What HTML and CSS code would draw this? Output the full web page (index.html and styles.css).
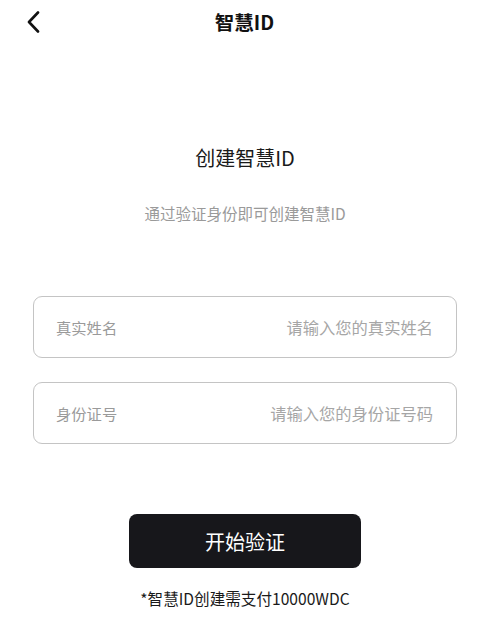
FILE: index.html
```html
<!DOCTYPE html>
<html lang="zh-CN">
<head>
<meta charset="utf-8">
<title>智慧ID</title>
<link rel="stylesheet" href="styles.css">
</head>
<body>
<header class="nav">
  <button class="back" aria-label="返回">
    <svg width="13" height="22" viewBox="0 0 13 22"><path d="M11 1.5 L2 11 L11 20.5" fill="none" stroke="#111" stroke-width="2.6" stroke-linecap="round" stroke-linejoin="round"/></svg>
  </button>
  <div class="nav-title">智慧ID</div>
  <div class="nav-side"></div>
</header>
<main class="content">
  <h1 class="title">创建智慧ID</h1>
  <p class="subtitle">通过验证身份即可创建智慧ID</p>
  <div class="field field-first">
    <span class="label">真实姓名</span>
    <span class="placeholder">请输入您的真实姓名</span>
  </div>
  <div class="field">
    <span class="label">身份证号</span>
    <span class="placeholder">请输入您的身份证号码</span>
  </div>
  <button class="primary">开始验证</button>
  <p class="note">*智慧ID创建需支付10000WDC</p>
</main>
</body>
</html>
```
FILE: styles.css
```css
* { box-sizing: border-box; }
html, body { margin: 0; padding: 0; background: #fff; }
body {
  font-family: "Noto Sans CJK SC", "Noto Sans", sans-serif;
  color: #1a1a1a;
  width: 493px;
}
.nav {
  height: 44px;
  display: grid;
  grid-template-columns: 1fr auto 1fr;
  align-items: center;
  padding: 0 31px 0 27px;
}
.back {
  border: 0;
  background: none;
  padding: 0;
  width: 13px;
  height: 22px;
  display: flex;
}
.nav-title {
  font-size: 19.5px;
  font-weight: 700;
  line-height: 26px;
  color: #111;
}
.content {
  width: 424px;
  margin-left: 33px;
  display: flex;
  flex-direction: column;
  align-items: center;
}
.title {
  margin: 100px 0 0;
  font-size: 20px;
  font-weight: 400;
  line-height: 28px;
  color: #1a1a1a;
}
.subtitle {
  margin: 30px 0 0;
  font-size: 15.5px;
  line-height: 22px;
  color: #9a9a9a;
}
.field {
  width: 100%;
  height: 62px;
  border: 1px solid #c4c4c4;
  border-radius: 9px;
  display: flex;
  align-items: center;
  justify-content: space-between;
  padding: 0 23px 0 22px;
  margin-top: 24px;
}
.field-first { margin-top: 72px; }
.label {
  font-size: 15.3px;
  color: #9a9a9a;
}
.placeholder {
  font-size: 16.3px;
  color: #a6a6a6;
}
.primary {
  margin-top: 70px;
  width: 232px;
  height: 54px;
  border: 0;
  border-radius: 8px;
  background: #17171b;
  color: #fff;
  font-family: inherit;
  font-size: 20px;
  font-weight: 400;
}
.note {
  margin: 20px 0 0;
  font-size: 15.6px;
  line-height: 20px;
  color: #1a1a1a;
}
```
